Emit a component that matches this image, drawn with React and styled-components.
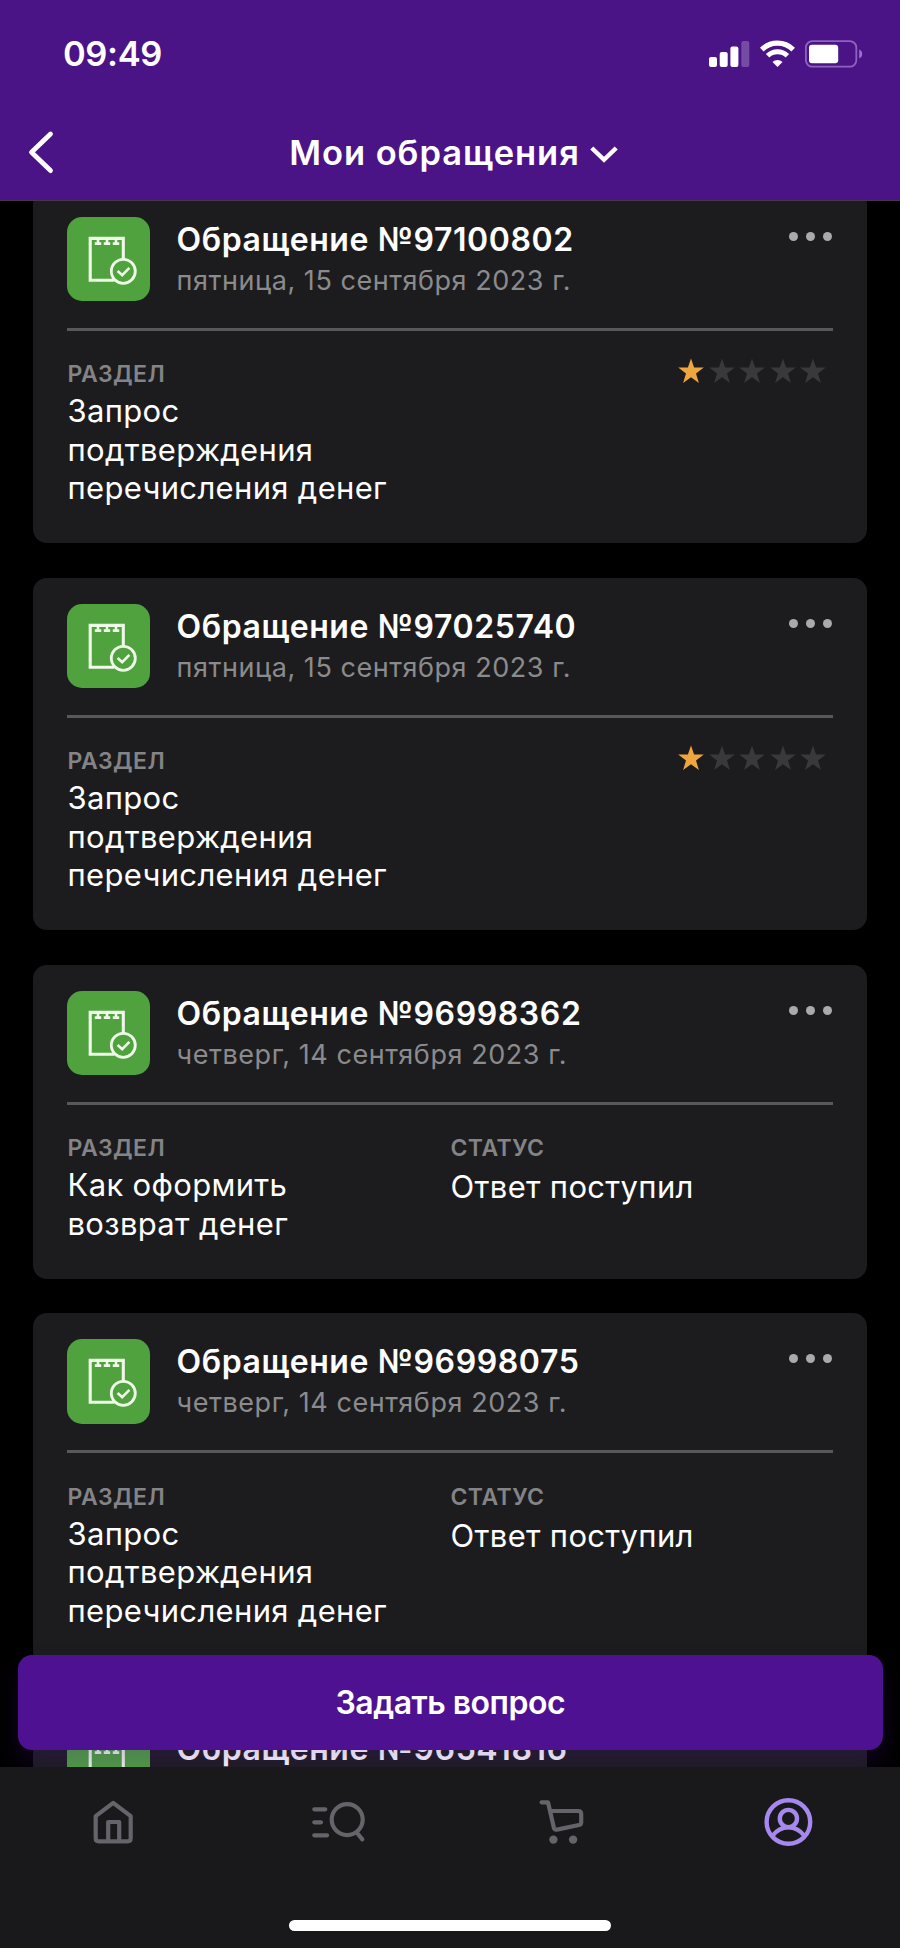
import styled, { createGlobalStyle } from "styled-components";

const GlobalStyle = createGlobalStyle`
  * {
    box-sizing: border-box;
  }

  body {
    margin: 0;
    background-color: #000;
    font-family: Inter, "Liberation Sans", sans-serif;
  }

  button {
    padding: 0;
    border: none;
    background: none;
    font-family: inherit;
    color: inherit;
  }

  svg {
    display: block;
    flex-shrink: 0;
  }
`;

const Screen = styled.div`
  display: flex;
  flex-direction: column;
  width: 900px;
  height: 1948px;
  overflow: hidden;
  background-color: #000;
  color: #fff;
`;

const Header = styled.header`
  flex-shrink: 0;
  height: 201px;
  background-color: #4a1486;
  border-bottom: 1px solid #45354f;
`;

const StatusBar = styled.div`
  display: flex;
  align-items: center;
  justify-content: space-between;
  height: 107px;
  padding: 0 37px 0 63px;
`;

const Time = styled.span`
  font-size: 34.5px;
  font-weight: 600;
  letter-spacing: -0.4px;
`;

const StatusIcons = styled.div`
  display: flex;
  align-items: center;
  gap: 10px;
`;

const NavBar = styled.div`
  display: grid;
  grid-template-columns: 80px 1fr 80px;
  align-items: center;
  height: 90px;
`;

const BackButton = styled.button`
  padding-left: 27px;
`;

const NavTitle = styled.h1`
  display: flex;
  align-items: center;
  justify-content: center;
  gap: 9px;
  margin: 0 0 0 8px;
  font-size: 34.5px;
  font-weight: 600;
  letter-spacing: 0.95px;
  white-space: nowrap;

  svg {
    margin-top: 4px;
  }
`;

const Main = styled.main`
  position: relative;
  flex: 1;
  min-height: 0;
  overflow: hidden;
`;

const TicketList = styled.ul`
  display: flex;
  flex-direction: column;
  gap: 34.5px;
  margin: -10.4px 33px 0;
  padding: 0;
  list-style: none;
`;

const Card = styled.li`
  padding: 26px 34px 35.3px;
  border-radius: 14px;
  background-color: #1c1c1e;
`;

const CardHeader = styled.div`
  display: flex;
  align-items: flex-start;
  height: 114px;
  border-bottom: 3px solid #58585a;
`;

const TicketBadge = styled.div`
  width: 83px;
  height: 84.5px;
  border-radius: 15px;
  background-color: #4fa23e;
`;

const CardHeading = styled.div`
  flex: 1;
  padding: 4px 0 0 26.5px;
  white-space: nowrap;
`;

const TicketTitle = styled.h2`
  margin: 0;
  font-size: 32px;
  font-weight: 600;
  line-height: 38px;
  letter-spacing: 0.6px;
`;

const TicketDate = styled.p`
  margin: 6px 0 0;
  font-size: 27px;
  line-height: 32px;
  letter-spacing: 0.55px;
  color: #8b8b8d;
`;

const MoreButton = styled.button`
  display: flex;
  gap: 8px;
  margin: 15px 1px 0 0;
`;

const Dot = styled.span`
  width: 9px;
  height: 9px;
  border-radius: 50%;
  background-color: #aaaaac;
`;

const CardBody = styled.div`
  display: grid;
  grid-template-columns: 1fr 1fr;
  padding-top: 29.5px;
`;

const Field = styled.div`
  padding-left: 0.5px;
`;

const FieldLabel = styled.div`
  font-size: 23px;
  font-weight: 600;
  line-height: 28px;
  letter-spacing: 0.4px;
  text-transform: uppercase;
  color: #848486;
`;

const FieldValue = styled.div`
  max-width: 330px;
  padding-top: ${(props) => (props.$offset ? "6px" : "4px")};
  font-size: 31px;
  line-height: 38.6px;
  letter-spacing: 0.33px;
`;

const Rating = styled.div`
  display: flex;
  justify-content: flex-end;
  gap: 4.5px;
  padding: 0 7px 0 0;
  margin-top: -2px;
`;

const AskButton = styled.button`
  position: absolute;
  left: 17.5px;
  right: 17px;
  bottom: 17px;
  height: 95.5px;
  border-radius: 14px;
  background-color: #4e1191;
  box-shadow: 0 14px 24px rgba(78, 17, 145, 0.22);
  font-size: 32px;
  font-weight: 600;
  letter-spacing: -0.5px;
`;

const TabBar = styled.nav`
  flex-shrink: 0;
  display: flex;
  flex-direction: column;
  align-items: center;
  justify-content: space-between;
  height: 181px;
  padding: 29px 0 17px;
  background-color: #19191b;
`;

const Tabs = styled.div`
  display: grid;
  grid-template-columns: repeat(4, 1fr);
  width: 100%;
`;

const Tab = styled.button`
  display: flex;
  justify-content: center;
  color: ${(props) => (props.$active ? "#a688ee" : "#64646a")};
`;

const HomeIndicator = styled.div`
  width: 322px;
  height: 11px;
  border-radius: 6px;
  background-color: #fff;
`;

const SignalIcon = () => (
  <svg width="41" height="28" viewBox="0 0 41 28" fill="#fff">
    <rect x="0" y="17" width="8" height="10" rx="2" />
    <rect x="10.7" y="12" width="8" height="15" rx="2" />
    <rect x="21.4" y="6.5" width="8" height="20.5" rx="2" />
    <rect x="32.3" y="1" width="8" height="26" rx="2" opacity="0.24" />
  </svg>
);

const WifiIcon = () => (
  <svg width="35" height="28" viewBox="0 0 35 28" fill="none" stroke="#fff">
    <path d="M1.8 9.6A22.5 22.5 0 0 1 33.2 9.6" strokeWidth="5.2" />
    <path d="M7.6 15.8A14.2 14.2 0 0 1 27.4 15.8" strokeWidth="5" />
    <path
      d="M17.5 27l-5-5a7.2 7.2 0 0 1 10 0z"
      fill="#fff"
      stroke="none"
    />
  </svg>
);

const BatteryIcon = () => (
  <svg width="58" height="28" viewBox="0 0 58 28">
    <rect
      x="0.9"
      y="1.1"
      width="50.4"
      height="25.6"
      rx="6.5"
      fill="none"
      stroke="#8d63bd"
      strokeWidth="1.8"
    />
    <rect x="4" y="4.8" width="29.2" height="18.4" rx="3" fill="#fff" />
    <path d="M54.2 9.5q3 1.2 3 4.4t-3 4.4z" fill="#9b6fd0" />
  </svg>
);

const BackIcon = () => (
  <svg width="28" height="44" viewBox="0 0 28 44" fill="none">
    <path
      d="M23.5 4L4.5 22.3L23.5 40.6"
      stroke="#fff"
      strokeWidth="4.8"
      strokeLinecap="round"
      strokeLinejoin="round"
    />
  </svg>
);

const ChevronDownIcon = () => (
  <svg width="30" height="20" viewBox="0 0 30 20" fill="none">
    <path d="M2.8 4L15 15.8L27.2 4" stroke="#fff" strokeWidth="4.4" />
  </svg>
);

const TicketIcon = () => (
  <svg width="83" height="84" viewBox="0 0 83 84" fill="none" stroke="#effae9">
    <path d="M56.3 42.5V21.4H23.2V63.3H47.5" strokeWidth="3.1" />
    <path
      d="M31 21v6M27.8 26.6h6.4M40 21v6M36.8 26.6h6.4M49 21v6M45.8 26.6h6.4"
      strokeWidth="2.6"
    />
    <circle cx="56.3" cy="54.3" r="12" strokeWidth="2.8" />
    <path d="M50.6 54l4.6 4.1l7.2-7.2" strokeWidth="2.6" />
  </svg>
);

const StarIcon = ({ filled }) => (
  <svg width="26" height="26" viewBox="0 0 26 26">
    <path
      d="M13 0.5L16.1 9.6H25.8L18 15.5L20.9 25L13 19.2L5.1 25L8 15.5L0.2 9.6H9.9Z"
      fill={filled ? "#f0a63e" : "#39393b"}
    />
  </svg>
);

const HomeIcon = () => (
  <svg width="60" height="52" viewBox="0 0 60 52" fill="none">
    <path
      d="M12.7 20.2L30.2 6.8L47.7 20.2V42.2Q47.7 45.3 44.6 45.3H15.8Q12.7 45.3 12.7 42.2Z"
      stroke="currentColor"
      strokeWidth="4.2"
      strokeLinejoin="round"
    />
    <path
      d="M25.2 45V26H36.2V45"
      stroke="currentColor"
      strokeWidth="4.2"
      strokeLinejoin="round"
    />
  </svg>
);

const SearchIcon = () => (
  <svg width="60" height="52" viewBox="0 0 60 52" fill="none">
    <g stroke="currentColor" strokeWidth="4.2" strokeLinecap="round">
      <path d="M6.3 13.3H17.3M6.3 26.3H13M6.3 39.3H19.1" />
      <circle cx="39.2" cy="23.6" r="15.5" />
      <path d="M49.5 37.5L54.3 43.3" />
    </g>
  </svg>
);

const CartIcon = () => (
  <svg width="60" height="52" viewBox="0 0 60 52" fill="none">
    <path
      d="M8.6 6.3H15L20.9 31.8Q21.5 34 23.9 33.6L46 29Q48.2 28.5 48.2 26.3V18Q48.2 15 45.2 15H18"
      stroke="currentColor"
      strokeWidth="4.2"
      strokeLinecap="round"
      strokeLinejoin="round"
    />
    <circle cx="20.4" cy="43.6" r="4.2" fill="currentColor" />
    <circle cx="40.1" cy="43.6" r="4.2" fill="currentColor" />
  </svg>
);

const ProfileIcon = () => (
  <svg width="60" height="52" viewBox="0 0 60 52" fill="none">
    <g stroke="currentColor" strokeWidth="4.4">
      <circle cx="30.4" cy="26" r="21.8" />
      <circle cx="30.4" cy="22.5" r="8.6" />
      <path d="M14.4 39.8Q21 31.4 30.4 31.4T46.4 39.8" />
    </g>
  </svg>
);

const tickets = [
  {
    id: 97100802,
    date: "пятница, 15 сентября 2023 г.",
    section: ["Запрос", "подтверждения", "перечисления денег"],
    rating: 1,
  },
  {
    id: 97025740,
    date: "пятница, 15 сентября 2023 г.",
    section: ["Запрос", "подтверждения", "перечисления денег"],
    rating: 1,
  },
  {
    id: 96998362,
    date: "четверг, 14 сентября 2023 г.",
    section: ["Как оформить", "возврат денег"],
    status: "Ответ поступил",
  },
  {
    id: 96998075,
    date: "четверг, 14 сентября 2023 г.",
    section: ["Запрос", "подтверждения", "перечисления денег"],
    status: "Ответ поступил",
  },
  {
    id: 96541816,
  },
];

const Ticket = ({ ticket }) => {
  return (
    <Card>
      <CardHeader>
        <TicketBadge>
          <TicketIcon />
        </TicketBadge>
        <CardHeading>
          <TicketTitle>Обращение №{ticket.id}</TicketTitle>
          {ticket.date ? <TicketDate>{ticket.date}</TicketDate> : null}
        </CardHeading>
        <MoreButton>
          <Dot />
          <Dot />
          <Dot />
        </MoreButton>
      </CardHeader>
      {ticket.section ? (
        <CardBody>
          <Field>
            <FieldLabel>Раздел</FieldLabel>
            <FieldValue>
              {ticket.section.map((line) => (
                <div key={line}>{line}</div>
              ))}
            </FieldValue>
          </Field>
          {ticket.status ? (
            <Field>
              <FieldLabel>Статус</FieldLabel>
              <FieldValue $offset>{ticket.status}</FieldValue>
            </Field>
          ) : (
            <Rating>
              {[1, 2, 3, 4, 5].map((value) => (
                <StarIcon key={value} filled={value <= ticket.rating} />
              ))}
            </Rating>
          )}
        </CardBody>
      ) : null}
    </Card>
  );
};

const App = () => {
  return (
    <>
      <GlobalStyle />
      <Screen>
        <Header>
          <StatusBar>
            <Time>09:49</Time>
            <StatusIcons>
              <SignalIcon />
              <WifiIcon />
              <BatteryIcon />
            </StatusIcons>
          </StatusBar>
          <NavBar>
            <BackButton>
              <BackIcon />
            </BackButton>
            <NavTitle>
              Мои обращения
              <ChevronDownIcon />
            </NavTitle>
          </NavBar>
        </Header>
        <Main>
          <TicketList>
            {tickets.map((ticket) => (
              <Ticket key={ticket.id} ticket={ticket} />
            ))}
          </TicketList>
          <AskButton>Задать вопрос</AskButton>
        </Main>
        <TabBar>
          <Tabs>
            <Tab>
              <HomeIcon />
            </Tab>
            <Tab>
              <SearchIcon />
            </Tab>
            <Tab>
              <CartIcon />
            </Tab>
            <Tab $active>
              <ProfileIcon />
            </Tab>
          </Tabs>
          <HomeIndicator />
        </TabBar>
      </Screen>
    </>
  );
};

export default App;
